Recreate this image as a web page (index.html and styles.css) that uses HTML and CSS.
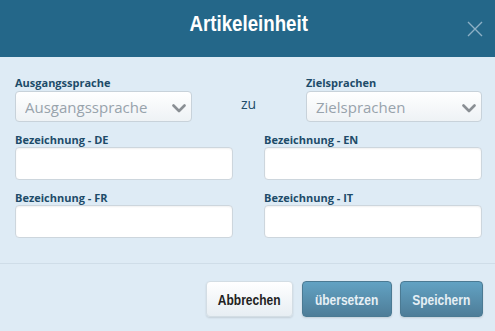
FILE: index.html
```html
<!DOCTYPE html>
<html lang="de">
<head>
<meta charset="utf-8">
<title>Artikeleinheit</title>
<link rel="stylesheet" href="styles.css">
</head>
<body>
<div class="modal">
  <header class="modal-header">
    <h1 class="modal-title">Artikeleinheit</h1>
    <button class="close-btn" aria-label="Schließen">
      <svg width="16" height="16" viewBox="0 0 16 16"><path d="M1 1 L15 15 M15 1 L1 15" stroke="#8db0c6" stroke-width="1.4" fill="none"/></svg>
    </button>
  </header>
  <main class="modal-body">
    <div class="lang-row">
      <div class="field field-src">
        <label class="label">Ausgangssprache</label>
        <div class="select-wrap">
          <select class="select"><option>Ausgangssprache</option></select>
          <svg class="chevron" width="14" height="9" viewBox="0 0 14 9"><path d="M1.5 1.5 L7 7 L12.5 1.5" stroke="#8a8f94" stroke-width="2.6" fill="none" stroke-linecap="round" stroke-linejoin="round"/></svg>
        </div>
      </div>
      <div class="zu">zu</div>
      <div class="field field-dst">
        <label class="label">Zielsprachen</label>
        <div class="select-wrap">
          <select class="select"><option>Zielsprachen</option></select>
          <svg class="chevron" width="14" height="9" viewBox="0 0 14 9"><path d="M1.5 1.5 L7 7 L12.5 1.5" stroke="#8a8f94" stroke-width="2.6" fill="none" stroke-linecap="round" stroke-linejoin="round"/></svg>
        </div>
      </div>
    </div>
    <div class="grid">
      <div class="field">
        <label class="label">Bezeichnung - DE</label>
        <input class="input" type="text">
      </div>
      <div class="field">
        <label class="label">Bezeichnung - EN</label>
        <input class="input" type="text">
      </div>
      <div class="field">
        <label class="label">Bezeichnung - FR</label>
        <input class="input" type="text">
      </div>
      <div class="field">
        <label class="label">Bezeichnung - IT</label>
        <input class="input" type="text">
      </div>
    </div>
  </main>
  <footer class="modal-footer">
    <button class="btn btn-default btn-cancel"><span class="btn-text">Abbrechen</span></button>
    <button class="btn btn-primary btn-translate"><span class="btn-text">übersetzen</span></button>
    <button class="btn btn-primary btn-save"><span class="btn-text">Speichern</span></button>
  </footer>
</div>
</body>
</html>
```
FILE: styles.css
```css
html, body {
  margin: 0;
  padding: 0;
  background: #deebf5;
}
.modal {
  width: 495px;
  height: 331px;
  background: #deebf5;
  display: flex;
  flex-direction: column;
  font-family: "Open Sans", "DejaVu Sans", sans-serif;
}
.modal-header {
  height: 57px;
  background: #246789;
  position: relative;
  display: flex;
  align-items: center;
  justify-content: center;
}
.modal-title {
  display: inline-block;
  margin: 0 0 9px 2px;
  font-family: "Liberation Sans", sans-serif;
  font-weight: bold;
  font-size: 22px;
  color: #ffffff;
  transform: scaleX(0.85);
}
.close-btn {
  position: absolute;
  right: 12px;
  top: 21px;
  width: 16px;
  height: 16px;
  padding: 0;
  border: 0;
  background: none;
  display: flex;
}
.modal-body {
  padding: 19px 13px 25px 15px;
  border-bottom: 1px solid #cfdde8;
}
.lang-row {
  display: flex;
  align-items: flex-start;
}
.field {
  display: flex;
  flex-direction: column;
}
.field-src { width: 177px; }
.field-dst { width: 176px; }
.zu {
  flex: 1;
  text-align: center;
  padding-top: 19px;
  font-size: 14px;
  color: #1e4d6b;
  line-height: 18px;
  padding-right: 1px;
}
.label {
  font-size: 11px;
  font-weight: bold;
  color: #1d4b69;
  line-height: 13px;
  height: 13px;
  margin-bottom: 2px;
}
.select-wrap {
  position: relative;
}
.select {
  appearance: none;
  -webkit-appearance: none;
  width: 100%;
  height: 31px;
  box-sizing: border-box;
  margin: 0;
  border: 1px solid #c8d2da;
  border-radius: 4px;
  background: linear-gradient(#ffffff, #eef2f5);
  font-family: "Open Sans", "DejaVu Sans", sans-serif;
  font-size: 15px;
  color: #98a3ac;
  padding: 0 0 0 9px;
  outline: none;
}
.chevron {
  position: absolute;
  right: 6px;
  top: 13px;
}
.grid {
  display: grid;
  grid-template-columns: 218px 218px;
  column-gap: 31px;
  row-gap: 11px;
  margin-top: 11px;
}
.grid .label {
  margin-bottom: 1px;
}
.input {
  height: 33px;
  box-sizing: border-box;
  margin: 0;
  border: 1px solid #cdd6dd;
  border-radius: 4px;
  background: #ffffff;
  box-shadow: inset 0 1px 2px rgba(0,0,0,0.06);
  outline: none;
}
.modal-footer {
  flex: 1;
  display: flex;
  justify-content: flex-end;
  align-items: flex-start;
  padding: 17px 12px 0 0;
}
.btn {
  height: 36px;
  box-sizing: border-box;
  border-radius: 4px;
  font-family: "Liberation Sans", sans-serif;
  font-weight: bold;
  font-size: 15px;
  padding: 0;
  margin-left: 8px;
  display: flex;
  align-items: center;
  justify-content: center;
}
.btn-text {
  display: inline-block;
  transform: scaleX(0.8);
  white-space: nowrap;
}
.btn-default {
  width: 87px;
  border: 1px solid #d3dde4;
  background: linear-gradient(#ffffff, #e7eef3);
  color: #222222;
  box-shadow: 0 1px 2px rgba(0,0,0,0.12);
}
.btn-primary {
  border: 1px solid #4b7a93;
  background: linear-gradient(#62a2c3, #4e7d98);
  color: #e6eff5;
  box-shadow: 0 1px 2px rgba(0,0,0,0.12);
}
.btn-translate { width: 90px; margin-left: 9px; }
.btn-save { width: 83px; }
```
